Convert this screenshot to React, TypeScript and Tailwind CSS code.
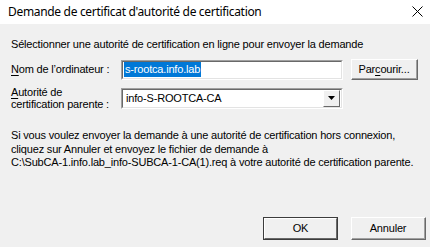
import React from "react";

const uiFont = { fontFamily: '"Liberation Sans", Arial, sans-serif' };

const ClassicButton = ({
  children,
  isDefault = false,
  className = "",
}: {
  children: React.ReactNode;
  isDefault?: boolean;
  className?: string;
}) => {
  if (isDefault) {
    return (
      <button className={"border border-[#3c3c3c] bg-[#f0f0f0] p-0 " + className}>
        <span className="flex h-full w-full items-center justify-center border-t border-l border-t-white border-l-white border-r border-b border-r-[#696969] border-b-[#696969] text-[11px] text-black">
          {children}
        </span>
      </button>
    );
  }
  return (
    <button
      className={
        "border-t border-l border-t-white border-l-white border-r border-b border-r-[#696969] border-b-[#696969] bg-[#f0f0f0] p-0 " +
        className
      }
    >
      <span className="flex h-full w-full items-center justify-center border-r border-b border-r-[#a0a0a0] border-b-[#a0a0a0] text-[11px] text-black">
        {children}
      </span>
    </button>
  );
};

const Sunken = ({ children, className = "" }: { children: React.ReactNode; className?: string }) => (
  <div
    className={
      "border-t border-l border-t-[#a0a0a0] border-l-[#a0a0a0] border-r border-b border-r-white border-b-white " +
      className
    }
  >
    <div className="flex h-full w-full items-center border-t border-l border-t-[#696969] border-l-[#696969] border-r border-b border-r-[#e3e3e3] border-b-[#e3e3e3] bg-white">
      {children}
    </div>
  </div>
);

export default function App() {
  return (
    <div className="flex h-[247px] w-[430px] flex-col overflow-hidden bg-[#f0f0f0] text-black" style={uiFont}>
      <div className="flex h-6 shrink-0 items-center justify-between bg-white pl-2 pr-[7px]">
        <span
          className="text-[12px] leading-none tracking-[-0.32px]"
          style={{ fontFamily: '"Noto Sans", "Open Sans", sans-serif' }}
        >
          Demande de certificat d'autorité de certification
        </span>
        <svg width="11" height="11" viewBox="0 0 11 11" className="mb-[1px]">
          <path d="M0.5 0.5 L10.5 10.5 M10.5 0.5 L0.5 10.5" stroke="#000" strokeWidth="1" />
        </svg>
      </div>

      <div className="flex flex-1 flex-col pl-[11px] pr-[4px] text-[11px] leading-[13px] tracking-[-0.18px]">
        <p className="mt-[14px] whitespace-nowrap">
          Sélectionner une autorité de certification en ligne pour envoyer la demande
        </p>

        <div className="mt-[8px] flex items-center">
          <label className="w-[110px] shrink-0">
            <span className="underline underline-offset-2">N</span>om de l’ordinateur :
          </label>
          <Sunken className="h-[20px] w-[222px]">
            <span className="ml-[1px] bg-[#0078d7] px-[1px] leading-[15px] text-white">s-rootca.info.lab</span>
          </Sunken>
          <ClassicButton className="ml-[8px] h-[21px] w-[67px]">
            <span>
              Par<span className="underline underline-offset-2">c</span>ourir...
            </span>
          </ClassicButton>
        </div>

        <div className="mt-[6px] flex items-center">
          <label className="w-[110px] shrink-0 leading-[12px]">
            <span className="underline underline-offset-2">A</span>utorité de
            <br />
            certification parente :
          </label>
          <Sunken className="h-[21px] w-[222px]">
            <span className="ml-[3px] flex-1">info-S-ROOTCA-CA</span>
            <div className="mr-[1px] flex h-[17px] w-[17px] items-center justify-center border-t border-l border-t-white border-l-white border-r border-b border-r-[#696969] border-b-[#696969] bg-[#f0f0f0]">
              <svg width="7" height="4" viewBox="0 0 7 4">
                <path d="M0 0 H7 L3.5 4 Z" fill="#000" />
              </svg>
            </div>
          </Sunken>
        </div>

        <p className="mt-[19px] whitespace-nowrap leading-[13.5px]">
          Si vous voulez envoyer la demande à une autorité de certification hors connexion,
          <br />
          cliquez sur Annuler et envoyez le fichier de demande à
          <br />
          C:\SubCA-1.info.lab_info-SUBCA-1-CA(1).req à votre autorité de certification parente.
        </p>

        <div className="mt-auto mb-[7px] flex justify-end gap-[13px]">
          <ClassicButton isDefault className="h-[23px] w-[75px]">
            OK
          </ClassicButton>
          <ClassicButton className="h-[23px] w-[75px]">Annuler</ClassicButton>
        </div>
      </div>
    </div>
  );
}
